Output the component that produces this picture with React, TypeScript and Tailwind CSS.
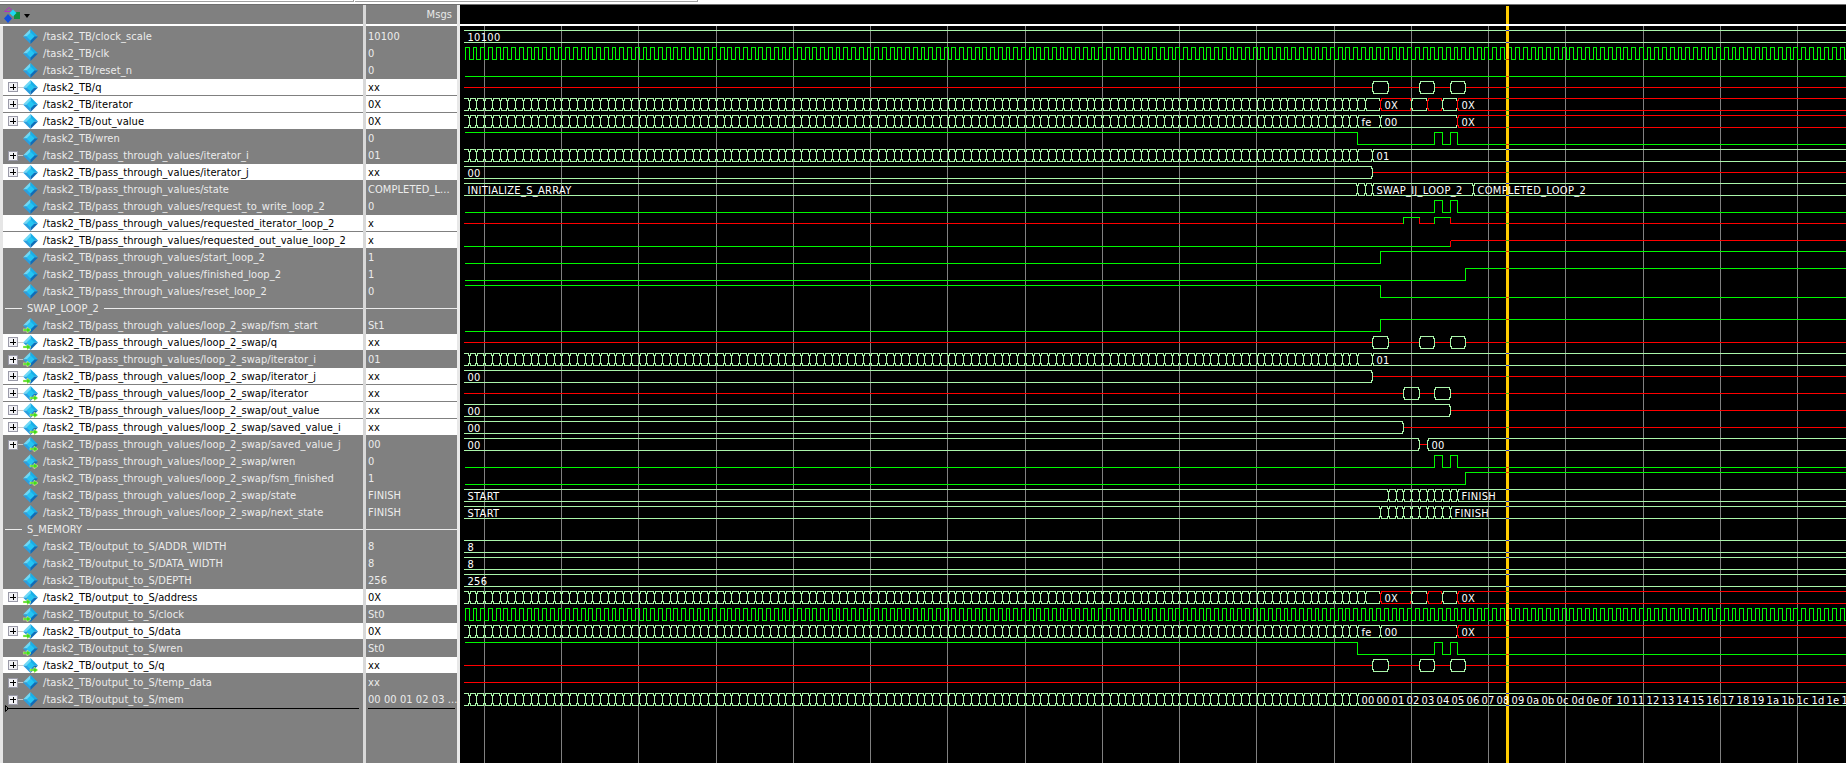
import React from "react";

const P = "/task2_TB/pass_through_values/";
const S = P + "loop_2_swap/";
const O = "/task2_TB/output_to_S/";

type Dir = "in" | "out" | undefined;
type Row = { name: string; value?: string; white?: boolean; plus?: boolean; dir?: Dir; divider?: boolean };

const rows: Row[] = [
  { name: "/task2_TB/clock_scale", value: "10100" },
  { name: "/task2_TB/clk", value: "0" },
  { name: "/task2_TB/reset_n", value: "0" },
  { name: "/task2_TB/q", value: "xx", white: true, plus: true },
  { name: "/task2_TB/iterator", value: "0X", white: true, plus: true },
  { name: "/task2_TB/out_value", value: "0X", white: true, plus: true },
  { name: "/task2_TB/wren", value: "0" },
  { name: P + "iterator_i", value: "01", plus: true },
  { name: P + "iterator_j", value: "xx", white: true, plus: true },
  { name: P + "state", value: "COMPLETED_L..." },
  { name: P + "request_to_write_loop_2", value: "0" },
  { name: P + "requested_iterator_loop_2", value: "x", white: true },
  { name: P + "requested_out_value_loop_2", value: "x", white: true },
  { name: P + "start_loop_2", value: "1" },
  { name: P + "finished_loop_2", value: "1" },
  { name: P + "reset_loop_2", value: "0" },
  { name: "SWAP_LOOP_2", divider: true },
  { name: S + "fsm_start", value: "St1", dir: "in" },
  { name: S + "q", value: "xx", white: true, plus: true, dir: "in" },
  { name: S + "iterator_i", value: "01", plus: true, dir: "in" },
  { name: S + "iterator_j", value: "xx", white: true, plus: true, dir: "in" },
  { name: S + "iterator", value: "xx", white: true, plus: true, dir: "out" },
  { name: S + "out_value", value: "xx", white: true, plus: true, dir: "out" },
  { name: S + "saved_value_i", value: "xx", white: true, plus: true, dir: "out" },
  { name: S + "saved_value_j", value: "00", plus: true, dir: "out" },
  { name: S + "wren", value: "0", dir: "out" },
  { name: S + "fsm_finished", value: "1", dir: "out" },
  { name: S + "state", value: "FINISH" },
  { name: S + "next_state", value: "FINISH" },
  { name: "S_MEMORY", divider: true },
  { name: O + "ADDR_WIDTH", value: "8" },
  { name: O + "DATA_WIDTH", value: "8" },
  { name: O + "DEPTH", value: "256" },
  { name: O + "address", value: "0X", white: true, plus: true, dir: "in" },
  { name: O + "clock", value: "St0", dir: "in" },
  { name: O + "data", value: "0X", white: true, plus: true, dir: "in" },
  { name: O + "wren", value: "St0", dir: "in" },
  { name: O + "q", value: "xx", white: true, plus: true, dir: "out" },
  { name: O + "temp_data", value: "xx", plus: true },
  { name: O + "mem", value: "00 00 01 02 03 ...", plus: true },
];

function SignalIcon({ dir }: { dir: Dir }) {
  return (
    <svg width="15" height="15" viewBox="0 0 15 15" className="shrink-0">
      <polygon points="7.5,0 0,7.5 7.5,7.5" fill="#6fd8f6" />
      <polygon points="7.5,0 15,7.5 7.5,7.5" fill="#18aee8" />
      <polygon points="0,7.5 7.5,15 7.5,7.5" fill="#2a9fe0" />
      <polygon points="15,7.5 7.5,15 7.5,7.5" fill="#0f6db8" />
      <polygon points="7.5,3.5 11.5,7.5 7.5,11.5 3.5,7.5" fill="#25c4f2" />
      {dir === "in" && <polygon points="0,11 4,11 4,9 8,12 4,15 4,13 0,13" fill="#3fdc1e" stroke="#f4f4a0" strokeWidth="0.5" />}
      {dir === "out" && <polygon points="7,11 11,11 11,9 15,12 11,15 11,13 7,13" fill="#3fdc1e" stroke="#f4f4a0" strokeWidth="0.5" />}
    </svg>
  );
}

function PlusBox() {
  return (
    <div className="relative flex h-[10px] w-[10px] shrink-0 items-center justify-center border border-[#9a9aa8] bg-[#f0f0f4]">
      <div className="absolute h-px w-[6px] bg-black" />
      <div className="absolute h-[6px] w-px bg-black" />
    </div>
  );
}

function NameRow({ row }: { row: Row }) {
  if (row.divider) {
    return (
      <div className="flex h-[17px] items-center text-[#ececec]">
        <div className="ml-[2px] h-px w-[17px] bg-[#ececec]" />
        <span className="mx-[5px]">{row.name}</span>
        <div className="h-px flex-1 bg-[#ececec]" />
      </div>
    );
  }
  return (
    <div className={`flex h-[17px] items-center pl-[5px] ${row.white ? "border-b border-[#808080] bg-white text-black" : "text-[#ececec]"}`}>
      {row.plus ? <PlusBox /> : <div className="w-[10px] shrink-0" />}
      <div className={`h-px w-[5px] shrink-0 ${row.plus ? "bg-[#c8c8c8]" : ""}`} />
      <SignalIcon dir={row.dir} />
      <span className="ml-[5px] whitespace-nowrap">{row.name}</span>
    </div>
  );
}

function ValueRow({ row }: { row: Row }) {
  if (row.divider) {
    return (
      <div className="flex h-[17px] items-center">
        <div className="h-px flex-1 bg-[#ececec]" />
      </div>
    );
  }
  return (
    <div className={`flex h-[17px] items-center overflow-hidden pl-[2px] whitespace-nowrap ${row.white ? "border-b border-[#808080] bg-white text-black" : "text-[#ececec]"}`}>
      {row.value}
    </div>
  );
}

// one clock period is 7.724px, ten periods between grid lines
const X = (k: number) => Math.round(461 + 7.724 * k) + 0.5;
const K0 = 0.26;
const END = 180;
const BUS = "#aaf5aa";
const GREEN = "#00f800";
const RED = "#ff0000";

type Seg =
  | { t: "bus" | "redbus"; a: number; b: number; label?: string }
  | { t: "red"; a: number; b: number }
  | { t: "pulse"; a: number; b: number }
  | { t: "low"; a: number; b: number };

const b = (a: number, e: number, label?: string): Seg => ({ t: "bus", a, b: e, label });
const R = (a: number, e: number, label?: string): Seg => ({ t: "redbus", a, b: e, label });
const r = (a: number, e: number): Seg => ({ t: "red", a, b: e });

function run(from: number, to: number): Seg[] {
  const out: Seg[] = [b(from, Math.floor(from) + 1)];
  for (let k = Math.floor(from) + 1; k < to; k++) out.push(b(k, k + 1));
  return out;
}

const qWave = [r(K0, 118), b(118, 120), r(120, 124), b(124, 126), r(126, 128), b(128, 130), r(130, END)];
const iterWave = [...run(K0, 117), b(117, 119), R(119, 123, "0X"), b(123, 125), R(125, 127), b(127, 129), R(129, END, "0X")];
const outWave = [...run(K0, 116), b(116, 119, "fe"), b(119, 129, "00"), R(129, END, "0X")];
const iWave = [...run(K0, 116), b(116, 118), b(118, END, "01")];
const jWave = [b(K0, 118, "00"), r(118, END)];

type Logic = { high: boolean; edges: number[] };
const wrenLogic: Logic = { high: true, edges: [116, 126, 127, 128, 129] };

const buses: Record<number, Seg[]> = {
  0: [b(K0, END, "10100")],
  3: qWave,
  4: iterWave,
  5: outWave,
  7: iWave,
  8: jWave,
  9: [b(K0, 116, "INITIALIZE_S_ARRAY"), b(116, 117), b(117, 118), b(118, 131, "SWAP_IJ_LOOP_2"), b(131, END, "COMPLETED_LOOP_2")],
  11: [r(K0, 122), { t: "pulse", a: 122, b: 124 }, r(124, 126), { t: "pulse", a: 126, b: 128 }, r(128, END)],
  12: [{ t: "low", a: K0, b: 128 }, r(128, END)],
  18: qWave,
  19: iWave,
  20: jWave,
  21: [r(K0, 122), b(122, 124), r(124, 126), b(126, 128), r(128, END)],
  22: [b(K0, 128, "00"), r(128, END)],
  23: [b(K0, 122, "00"), r(122, END)],
  24: [b(K0, 124, "00"), r(124, 125), b(125, END, "00")],
  27: [b(K0, 120, "START"), ...run(120, 129), b(129, END, "FINISH")],
  28: [b(K0, 119, "START"), ...run(119, 128), b(128, END, "FINISH")],
  30: [b(K0, END, "8")],
  31: [b(K0, END, "8")],
  32: [b(K0, END, "256")],
  33: iterWave,
  35: outWave,
  37: qWave,
  38: [r(K0, END)],
  39: [...run(K0, 116), b(116, END)],
};

const logics: Record<number, Logic> = {
  2: { high: false, edges: [] },
  6: wrenLogic,
  10: { high: false, edges: [126, 127, 128, 129] },
  13: { high: false, edges: [119] },
  14: { high: false, edges: [130] },
  15: { high: true, edges: [119] },
  17: { high: false, edges: [119] },
  25: { high: false, edges: [126, 127, 128, 129] },
  26: { high: false, edges: [130] },
  36: wrenLogic,
};

const memTokens =
  "00 00 01 02 03 04 05 06 07 08 09 0a 0b 0c 0d 0e 0f 10 11 12 13 14 15 16 17 18 19 1a 1b 1c 1d 1e 1f".split(" ");

const rowY = (i: number) => 36.5 + 17 * i;
const gridXs = Array.from({ length: 18 }, (_, i) => Math.round(484 + 77.24 * i) + 0.5);

// stepped corners, the way the bus cells look at this zoom level
function cellPath(c: number, x1: number, x2: number, open: boolean) {
  const t = c - 6;
  const u = c + 6;
  const right = `L${x2 - 1} ${t}L${x2 - 1} ${c - 4}L${x2} ${c - 4}L${x2} ${c + 4}L${x2 - 1} ${c + 4}L${x2 - 1} ${u}`;
  if (open) return `M${x1} ${t}${right}L${x1} ${u}`;
  return `M${x1} ${c - 4}L${x1 + 1} ${c - 4}L${x1 + 1} ${t}${right}L${x1 + 1} ${u}L${x1 + 1} ${c + 4}L${x1} ${c + 4}Z`;
}

function logicPath(c: number, l: Logic) {
  let y = l.high ? c - 6 : c + 6;
  let d = `M464.5 ${y}`;
  for (const e of l.edges) {
    const x = X(e);
    d += `L${x} ${y}`;
    y = y === c - 6 ? c + 6 : c - 6;
    d += `L${x} ${y}`;
  }
  return d + `L1850 ${y}`;
}

function clockPath(c: number) {
  let d = `M465.5 ${c + 6}L465.5 ${c - 6}`;
  for (let k = 1; k < END; k++) {
    const fall = X(k);
    const rise = Math.round(461 + 7.724 * (k + 0.5)) + 0.5;
    d += `L${fall} ${c - 6}L${fall} ${c + 6}L${rise} ${c + 6}L${rise} ${c - 6}`;
  }
  return d;
}

function Waves() {
  const paths: React.ReactNode[] = [];
  const texts: React.ReactNode[] = [];
  const dots: React.ReactNode[] = [];
  const dot = (y: number, fill: string, key: string) => (
    <rect key={key} x={1506} y={y - 0.5} width={3} height={1} fill={fill} />
  );

  Object.entries(buses).forEach(([key, segs]) => {
    const i = Number(key);
    const c = rowY(i);
    segs.forEach((s, n) => {
      const x1 = s.a === K0 ? 463.5 : X(s.a);
      const x2 = X(s.b);
      const id = `${i}-${n}`;
      if (s.t === "bus" || s.t === "redbus") {
        paths.push(<path key={id} d={cellPath(c, x1, x2, s.a === K0)} fill="none" stroke={s.t === "bus" ? BUS : RED} />);
        if (s.label)
          texts.push(
            <text key={id} x={x1 + 4} y={c + 4} fill="#ffffff">
              {s.label}
            </text>,
          );
      } else if (s.t === "red") {
        paths.push(<path key={id} d={`M${x1} ${c}L${x2} ${c}`} stroke={RED} />);
      } else if (s.t === "low") {
        paths.push(<path key={id} d={`M${x1} ${c + 6}L${x2} ${c + 6}`} stroke={GREEN} />);
        paths.push(<path key={id + "v"} d={`M${x2} ${c + 6}L${x2} ${c}`} stroke={RED} />);
      } else {
        paths.push(<path key={id} d={`M${x1} ${c}L${x1} ${c - 6}L${x2} ${c - 6}`} fill="none" stroke={GREEN} />);
        paths.push(<path key={id + "v"} d={`M${x2} ${c - 6}L${x2} ${c}`} stroke={RED} />);
      }
    });
    const last = segs[segs.length - 1];
    if (last.t === "bus") {
      dots.push(dot(c - 6, "#3838c8", `${i}t`), dot(c + 6, "#3838c8", `${i}b`));
    } else if (last.t === "redbus") {
      dots.push(dot(c - 6, "#40b010", `${i}t`), dot(c + 6, "#40b010", `${i}b`));
    } else {
      dots.push(dot(c, "#40b010", `${i}c`));
    }
  });

  Object.entries(logics).forEach(([key, l]) => {
    const i = Number(key);
    const c = rowY(i);
    paths.push(<path key={`l${i}`} d={logicPath(c, l)} fill="none" stroke={GREEN} />);
    const high = l.high !== (l.edges.length % 2 === 1);
    dots.push(dot(high ? c - 6 : c + 6, "#f02800", `d${i}`));
  });

  [1, 34].forEach((i) => {
    const c = rowY(i);
    paths.push(<path key={`c${i}`} d={clockPath(c)} fill="none" stroke={GREEN} />);
    dots.push(dot(c + 6, "#f02800", `d${i}`));
  });

  return (
    <svg width="1386" height="737" viewBox="460 26 1386 737" className="block" shapeRendering="crispEdges">
      {gridXs.map((x) => (
        <path key={x} d={`M${x} 26L${x} 763`} stroke="#808080" />
      ))}
      {paths}
      <rect x={1506} y={26} width={3} height={737} fill="#ffcc00" />
      {dots}
      <g fontSize="11" letterSpacing="0.3">
        {texts}
        {memTokens.map((t, i) => (
          <text key={i} x={1361.5 + 15 * i} y={rowY(39) + 4} fill="#ffffff">
            {t}
          </text>
        ))}
      </g>
    </svg>
  );
}

export default function App() {
  return (
    <div className="flex h-[763px] w-[1846px] flex-col overflow-hidden bg-[#e6e6e6] font-['DejaVu_Sans_Condensed','DejaVu_Sans',sans-serif] text-[11px] leading-none tracking-[0.07px]">
      <div className="flex h-[4px] bg-white">
        <div className="h-[2px] w-[354px] border-r border-b border-[#a0a0a0]" />
        <div className="ml-px h-[2px] w-[343px] border-r border-b border-[#a0a0a0]" />
      </div>
      <div className="flex min-h-0 flex-1 border-t border-[#707070]">
        <div className="flex w-[363px] shrink-0 flex-col">
          <div className="flex h-[19px] items-center bg-[#808080] pl-[3px]">
            <svg width="18" height="18" viewBox="0 0 18 18">
              <polygon points="1.5,5.5 6,1.5 10.5,5.5" fill="none" stroke="#b030c0" />
              <rect x="11" y="6" width="6" height="7" fill="#109040" />
              <polygon points="10,3.5 13.5,7 10,10.5 6.5,7" fill="#20d8f0" />
              <polygon points="5,8 9,12.5 5,17 1,12.5" fill="#1050e0" />
            </svg>
            <svg width="6" height="4" viewBox="0 0 6 4" className="ml-[3px] mt-[2px]">
              <polygon points="0,0 6,0 3,4" fill="#000" />
            </svg>
          </div>
          <div className="h-[2px] bg-white" />
          <div className="flex flex-1 flex-col pl-[3px]">
            <div className="flex flex-1 flex-col bg-[#808080] pt-[2px]">
              {rows.map((row) => (
                <NameRow key={row.name} row={row} />
              ))}
              <div className="relative mt-0 ml-[4px] mr-[4px] h-px bg-black">
                <svg width="4" height="7" viewBox="0 0 4 7" className="absolute -left-[2px] -top-[3px]">
                  <polygon points="0.5,0.5 3.5,3.5 0.5,6.5" fill="none" stroke="#000" />
                </svg>
              </div>
            </div>
          </div>
        </div>
        <div className="w-[3px] shrink-0 bg-[#d8d8d8]" />
        <div className="flex w-[91px] shrink-0 flex-col">
          <div className="flex h-[19px] items-center justify-end bg-[#808080] pr-[5px] text-[#e8e8e8]">Msgs</div>
          <div className="h-[2px] bg-white" />
          <div className="flex flex-1 flex-col bg-[#808080] pt-[2px]">
            {rows.map((row) => (
              <ValueRow key={row.name} row={row} />
            ))}
            <div className="mx-[2px] h-px bg-black" />
          </div>
        </div>
        <div className="w-[3px] shrink-0 bg-[#e8e8e8]" />
        <div className="flex min-w-0 flex-1 flex-col bg-black">
          <div className="relative h-[19px]">
            <div className="absolute top-px bottom-0 left-[1046px] w-[3px] bg-[#ffcc00]" />
          </div>
          <div className="h-[2px] bg-white" />
          <Waves />
        </div>
      </div>
    </div>
  );
}
